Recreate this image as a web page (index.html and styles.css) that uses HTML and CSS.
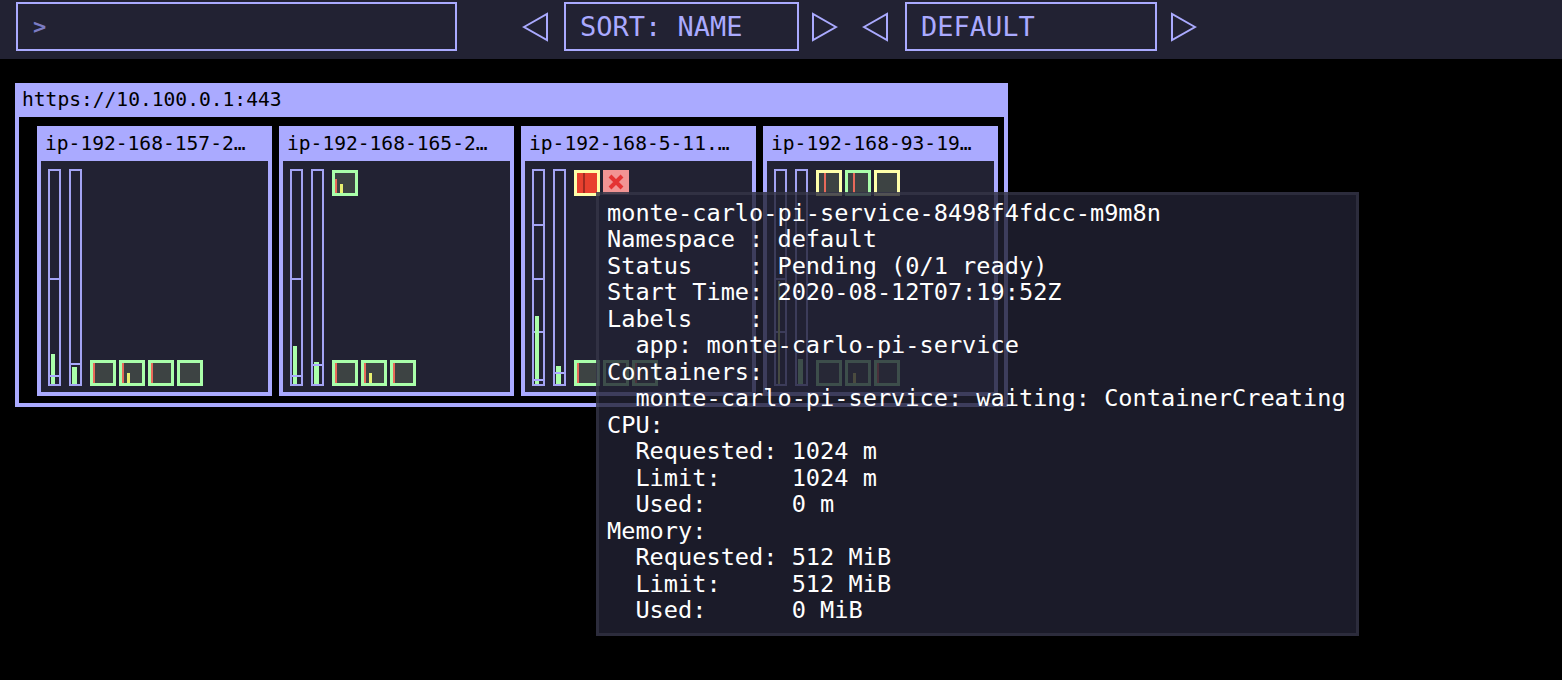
FILE: index.html
```html
<!DOCTYPE html>
<html>
<head>
<meta charset="utf-8">
<link rel="stylesheet" href="styles.css">
</head>
<body>
<div class="topbar">
  <div class="search"><span class="prompt">&gt;</span></div>
  <div class="selector sort">
    <svg class="arrow" width="26" height="30" viewBox="0 0 26 30"><polygon points="2,15 25,2 25,28" /></svg>
    <div class="box box-sort">SORT: NAME</div>
    <svg class="arrow" width="26" height="30" viewBox="0 0 26 30"><polygon points="24,15 1,2 1,28" /></svg>
  </div>
  <div class="selector theme">
    <svg class="arrow" width="26" height="30" viewBox="0 0 26 30"><polygon points="2,15 25,2 25,28" /></svg>
    <div class="box box-theme">DEFAULT</div>
    <svg class="arrow" width="26" height="30" viewBox="0 0 26 30"><polygon points="24,15 1,2 1,28" /></svg>
  </div>
</div>

<div class="main">
  <div class="cluster">
    <div class="cluster-title">https://10.100.0.1:443</div>
    <div class="cluster-body">

      <div class="node">
        <div class="node-title">ip-192-168-157-2…</div>
        <div class="node-inner">
          <div class="bar"><div class="tick" style="top:50%"></div><div class="used" style="height:30px"></div><div class="req" style="bottom:7px"></div></div>
          <div class="bar"><div class="used wide" style="height:17px"></div><div class="req" style="bottom:19px"></div></div>
          <div class="pods">
            <div class="pod-row"></div>
            <div class="pod-row">
              <div class="pod"><div class="cpu" style="height:20px"></div></div>
              <div class="pod"><div class="cpu" style="height:20px"></div><div class="mem" style="height:10px"></div></div>
              <div class="pod"><div class="cpu" style="height:20px"></div></div>
              <div class="pod"></div>
            </div>
          </div>
        </div>
      </div>

      <div class="node">
        <div class="node-title">ip-192-168-165-2…</div>
        <div class="node-inner">
          <div class="bar"><div class="tick" style="top:50%"></div><div class="used" style="height:38px"></div><div class="req" style="bottom:7px"></div></div>
          <div class="bar"><div class="used wide" style="height:22px"></div><div class="req" style="bottom:18px"></div></div>
          <div class="pods">
            <div class="pod-row">
              <div class="pod"><div class="cpu" style="height:14px"></div><div class="mem" style="height:9px"></div></div>
            </div>
            <div class="pod-row">
              <div class="pod"><div class="cpu" style="height:20px"></div></div>
              <div class="pod"><div class="cpu" style="height:20px"></div><div class="mem" style="height:10px"></div></div>
              <div class="pod"><div class="cpu" style="height:20px"></div></div>
            </div>
          </div>
        </div>
      </div>

      <div class="node">
        <div class="node-title">ip-192-168-5-11.…</div>
        <div class="node-inner">
          <div class="bar"><div class="tick" style="top:25%"></div><div class="tick" style="top:50%"></div><div class="tick" style="top:75%"></div><div class="used" style="height:68px"></div><div class="req" style="bottom:3px"></div></div>
          <div class="bar"><div class="used wide" style="height:18px"></div><div class="req" style="bottom:10px"></div></div>
          <div class="pods">
            <div class="pod-row">
              <div class="pod pending failing"><div class="split"></div></div>
              <div class="pod error">
                <svg width="26" height="24" viewBox="0 0 26 24"><path d="M7 6 L19 18 M19 6 L7 18" /></svg>
              </div>
            </div>
            <div class="pod-row">
              <div class="pod"><div class="cpu" style="height:20px"></div></div>
              <div class="pod"></div>
              <div class="pod"><div class="cpu" style="height:20px"></div></div>
            </div>
          </div>
        </div>
      </div>

      <div class="node">
        <div class="node-title">ip-192-168-93-19…</div>
        <div class="node-inner">
          <div class="bar"><div class="tick" style="top:50%"></div><div class="tick" style="top:75%"></div><div class="used yellow" style="height:103px"></div></div>
          <div class="bar"><div class="used wide" style="height:25px"></div></div>
          <div class="pods">
            <div class="pod-row">
              <div class="pod pending"><div class="cpu inset" style="height:20px"></div></div>
              <div class="pod"><div class="cpu inset" style="height:20px"></div></div>
              <div class="pod pending"></div>
            </div>
            <div class="pod-row">
              <div class="pod"></div>
              <div class="pod"><div class="mem" style="height:10px"></div></div>
              <div class="pod"><div class="cpu" style="height:20px"></div></div>
            </div>
          </div>
        </div>
      </div>

    </div>
  </div>

  <div class="tooltip">monte-carlo-pi-service-8498f4fdcc-m9m8n
Namespace : default
Status    : Pending (0/1 ready)
Start Time: 2020-08-12T07:19:52Z
Labels    :
  app: monte-carlo-pi-service
Containers:
  monte-carlo-pi-service: waiting: ContainerCreating
CPU:
  Requested: 1024 m
  Limit:     1024 m
  Used:      0 m
Memory:
  Requested: 512 MiB
  Limit:     512 MiB
  Used:      0 MiB</div>
</div>
</body>
</html>
```

FILE: styles.css
```css
html, body {
  margin: 0;
  padding: 0;
  background: #000000;
  font-family: "DejaVu Sans Mono", "Liberation Mono", monospace;
}

.topbar {
  height: 59px;
  box-sizing: border-box;
  background: #222233;
  padding: 2px 0 0 16px;
  display: flex;
  align-items: flex-start;
}

.search {
  width: 441px;
  height: 49px;
  box-sizing: border-box;
  border: 2px solid #aaaaff;
  display: flex;
  align-items: center;
  padding-left: 15px;
}

.prompt {
  color: #7c7cc4;
  font-size: 22px;
  font-weight: bold;
  line-height: 1;
  margin-top: 1px;
}

.selector {
  display: flex;
  align-items: center;
  height: 49px;
}

.sort { margin-left: 65px; }
.theme { margin-left: 24px; }

.arrow polygon {
  fill: none;
  stroke: #aaaaff;
  stroke-width: 2;
  stroke-linejoin: miter;
}

.box {
  height: 49px;
  box-sizing: border-box;
  border: 2px solid #aaaaff;
  color: #aaaaff;
  font-size: 27px;
  line-height: 45px;
  padding-left: 14px;
  white-space: pre;
}

.box-sort { width: 235px; margin: 0 13px 0 16px; }
.box-theme { width: 252px; margin: 0 14px 0 17px; }

.main {
  position: relative;
  height: 621px;
  box-sizing: border-box;
  padding: 24px 0 0 15px;
}

.cluster {
  width: 993px;
  background: #aaaaff;
  display: flex;
  flex-direction: column;
}

.cluster-title {
  height: 34px;
  line-height: 34px;
  padding-left: 7px;
  font-size: 19.6px;
  color: #000000;
  white-space: pre;
}

.cluster-body {
  margin: 0 4px 4px;
  height: 286px;
  box-sizing: border-box;
  background: #000000;
  padding: 9px 0 0 18px;
  display: flex;
  gap: 7px;
}

.node {
  width: 235px;
  height: 270px;
  background: #aaaaff;
  display: flex;
  flex-direction: column;
}

.node-title {
  height: 35px;
  line-height: 35px;
  padding-left: 8px;
  font-size: 19.6px;
  color: #000000;
  white-space: pre;
  overflow: hidden;
}

.node-inner {
  flex: 1;
  margin: 0 4px 4px;
  background: #222233;
  padding: 8px 7px 6px;
  display: flex;
  gap: 8px;
}

.bar {
  width: 13px;
  box-sizing: border-box;
  border: 2px solid #a4a4f4;
  position: relative;
}

.bar .tick {
  position: absolute;
  left: 0;
  right: 0;
  height: 2px;
  background: #a4a4f4;
}

.bar .used {
  position: absolute;
  left: 1px;
  bottom: 0;
  width: 4px;
  background: #aaffaa;
}

.bar .used.wide { left: 1px; width: 5px; }
.bar .used.yellow { background: #d8e87a; width: 2px; left: 2px; }

.bar .req {
  position: absolute;
  left: 0;
  right: 0;
  height: 2px;
  background: #aaaaff;
}

.pods {
  flex: 1;
  display: flex;
  flex-direction: column;
  justify-content: space-between;
  padding-top: 1px;
}

.pod-row {
  display: flex;
  gap: 3px;
  min-height: 26px;
}

.pod {
  width: 26px;
  height: 26px;
  box-sizing: border-box;
  border: 3px solid #aaffaa;
  background: #3d4343;
  position: relative;
}

.pod.pending { border-color: #ffffaa; }

.pod .cpu {
  position: absolute;
  left: 0;
  bottom: 0;
  width: 2px;
  background: #e86a5a;
}

.pod .cpu.inset { left: 5px; }

.pod .mem {
  position: absolute;
  left: 5px;
  bottom: 0;
  width: 3px;
  background: #e8f070;
}

.pod.failing {
  background: #e8402e;
}

.pod.failing .split {
  position: absolute;
  left: 6px;
  top: 0;
  bottom: 0;
  width: 2px;
  background: #a02a20;
}

.pod.error {
  border: none;
  height: 24px;
  background: #f29494;
}

.pod.error svg {
  display: block;
}

.pod.error path {
  stroke: #e43434;
  stroke-width: 4;
  fill: none;
}

.tooltip {
  position: absolute;
  left: 596px;
  top: 133px;
  width: 763px;
  height: 444px;
  box-sizing: border-box;
  border: 3px solid rgba(52, 52, 70, 0.85);
  background: rgba(34, 34, 51, 0.8);
  background-clip: padding-box;
  padding: 5px 8px;
  color: #ffffff;
  font-size: 23.6px;
  line-height: 26.47px;
  white-space: pre;
}
```
